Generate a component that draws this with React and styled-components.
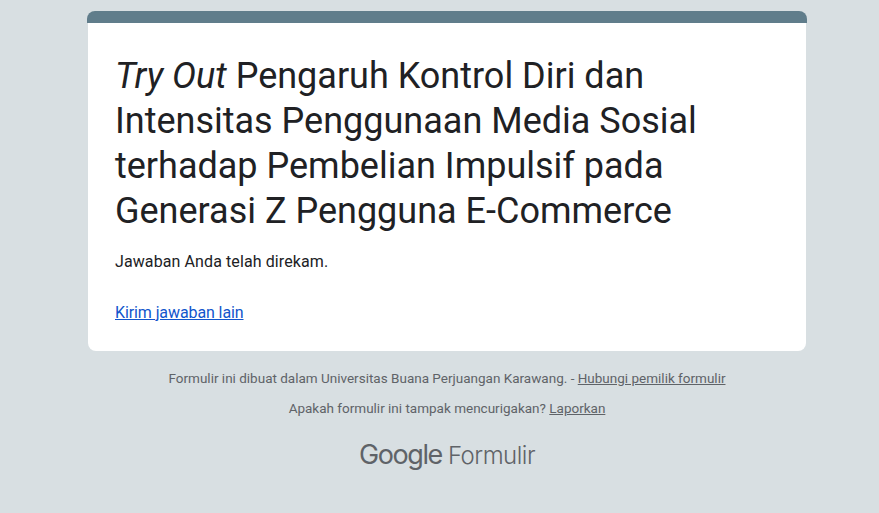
import { createGlobalStyle } from "styled-components";
import styled from "styled-components";

const GlobalStyle = createGlobalStyle`
  html, body {
    margin: 0;
    padding: 0;
    height: 100%;
    overflow: hidden;
    background: rgb(216, 223, 226);
  }
`;

const Page = styled.div`
  display: flex;
  flex-direction: column;
  align-items: center;
  padding: 11px 0 0 15px;
  font-family: Roboto, "Liberation Sans", sans-serif;
`;

const Card = styled.div`
  width: 720px;
`;

const CardStripe = styled.div`
  height: 12px;
  border-radius: 8px 8px 0 0;
  background: rgb(96, 125, 139);
`;

const CardBody = styled.div`
  box-sizing: border-box;
  height: 328px;
  margin: 0 1px;
  padding: 31px 28px 0 27px;
  background: #fff;
  border-radius: 0 0 8px 8px;
`;

const Title = styled.h1`
  margin: 0;
  font-size: 36px;
  font-weight: 400;
  line-height: 45px;
  color: #202124;
`;

const Message = styled.p`
  margin: 16px 0 0;
  font-size: 16px;
  line-height: 24px;
  letter-spacing: 0.1px;
  color: #202124;
`;

const ResponseLink = styled.a`
  display: block;
  margin-top: 27px;
  font-size: 16px;
  line-height: 24px;
  letter-spacing: -0.1px;
  color: rgb(17, 85, 204);
  text-decoration: underline;
`;

const FooterLine = styled.div`
  width: 720px;
  margin-top: ${(props) => props.gap}px;
  font-size: 13.5px;
  line-height: 20px;
  text-align: center;
  color: rgb(95, 99, 104);
`;

const FooterLink = styled.a`
  color: rgb(95, 99, 104);
  text-decoration: underline;
`;

const Brand = styled.div`
  display: flex;
  align-items: baseline;
  gap: 6px;
  margin-top: 20px;
  color: rgb(95, 99, 104);
`;

const BrandGoogle = styled.span`
  font-family: Inter, Roboto, sans-serif;
  font-size: 27px;
  font-weight: 400;
  letter-spacing: -1.4px;
`;

const BrandProduct = styled.span`
  font-family: Inter, Roboto, sans-serif;
  font-size: 24px;
  font-weight: 300;
  letter-spacing: -0.5px;
`;

function App() {
  return (
    <Page>
      <GlobalStyle />
      <Card>
        <CardStripe />
        <CardBody>
          <Title>
            <em>Try Out</em> Pengaruh Kontrol Diri dan Intensitas Penggunaan Media Sosial terhadap Pembelian Impulsif pada Generasi Z Pengguna E-Commerce
          </Title>
          <Message>Jawaban Anda telah direkam.</Message>
          <ResponseLink href="#">Kirim jawaban lain</ResponseLink>
        </CardBody>
      </Card>
      <FooterLine gap={17}>
        Formulir ini dibuat dalam Universitas Buana Perjuangan Karawang. - <FooterLink href="#">Hubungi pemilik formulir</FooterLink>
      </FooterLine>
      <FooterLine gap={10}>
        Apakah formulir ini tampak mencurigakan? <FooterLink href="#">Laporkan</FooterLink>
      </FooterLine>
      <Brand>
        <BrandGoogle>Google</BrandGoogle>
        <BrandProduct>Formulir</BrandProduct>
      </Brand>
    </Page>
  );
}

export default App;
